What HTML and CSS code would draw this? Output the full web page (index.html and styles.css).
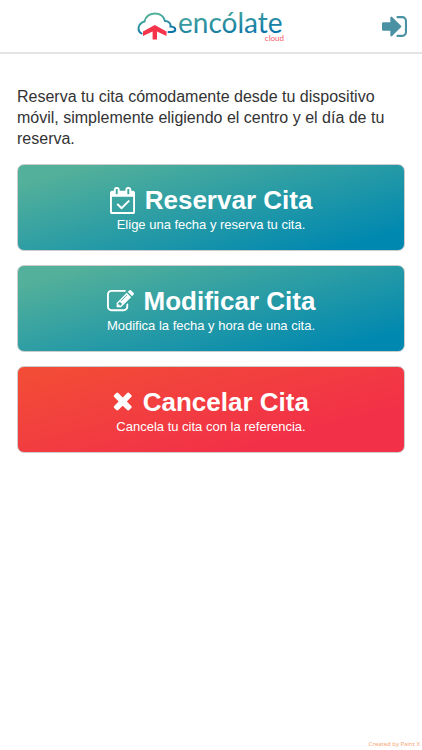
FILE: index.html
```html
<!DOCTYPE html>
<html lang="es">
<head>
	<meta charset="utf-8">
	<meta name="viewport" content="width=device-width, initial-scale=1">
	<title>Encólate Cloud</title>
	<link rel="stylesheet" href="styles.css">
</head>
<body>

<header class="header">
	<a href="#" class="logo">
		<svg class="logo-img" viewBox="0 -9 148 48" role="img" aria-label="encólate cloud">
			<defs>
				<linearGradient id="marca" x1="0" y1="0" x2="0.4" y2="1">
					<stop offset="0.2" stop-color="#53b09a"/>
					<stop offset="1" stop-color="#0a72a8"/>
				</linearGradient>
			</defs>
			<!-- nube -->
			<path class="logo-cloud" d="M4.500 22.500C0 20 .5 12.500 7.500 10.500C8.500 5 13.500 2.500 18 2.500C23 2.500 27 5.500 28 10C31.500 10 34 12.500 33.500 15.500C37 15.500 39 17.500 38 19.500C37.200 21.300 35 21 31.500 21"/>
			<!-- flecha -->
			<path class="logo-arrow" d="M17.800 14L29.500 20.500V25L20 20.500V28.500H15.600V20.500L6 25V20.500Z"/>
			<text class="logo-text" x="41" y="22">encólate</text>
			<text class="logo-sub" x="147" y="30" text-anchor="end">cloud</text>
		</svg>
	</a>
	<a href="#" class="login" aria-label="Entrar">
		<svg class="login-icon" viewBox="128 256 1536 1280">
			<path d="M1312 896q0 26-19 45l-544 544q-19 19-45 19t-45-19-19-45v-288h-448q-26 0-45-19t-19-45v-384q0-26 19-45t45-19h448v-288q0-26 19-45t45-19 45 19l544 544q19 19 19 45zm352-352v704q0 119-84.500 203.500t-203.500 84.500h-320q-13 0-22.500-9.500t-9.500-22.500q0-4-1-20t-.5-26.500 3-23.500 10-19.500 20.500-6.500h320q66 0 113-47t47-113v-704q0-66-47-113t-113-47h-312l-11.500-1-11.500-3-8-5.500-7-9-2-13.500q0-4-1-20t-.5-26.500 3-23.500 10-19.500 20.500-6.500h320q119 0 203.500 84.500t84.500 203.500z"/>
		</svg>
	</a>
</header>

<main class="content">
	<p class="intro">Reserva tu cita cómodamente desde tu dispositivo móvil, simplemente eligiendo el centro y el día de tu reserva.</p>

	<button type="button" class="btn">
		<span class="btn-title">
			<svg class="icon" viewBox="0 0 1664 1792">
				<path fill-rule="evenodd" d="M1303 964l-512 512q-10 9-23 9t-23-9l-288-288q-9-10-9-23t9-22l46-46q9-9 22-9t23 9l220 220 444-444q10-9 23-9t22 9l46 46q9 9 9 22t-9 23zm-1175 700h1408v-1024h-1408v1024zm384-1216v-288q0-14-9-23t-23-9h-64q-14 0-23 9t-9 23v288q0 14 9 23t23 9h64q14 0 23-9t9-23zm768 0v-288q0-14-9-23t-23-9h-64q-14 0-23 9t-9 23v288q0 14 9 23t23 9h64q14 0 23-9t9-23zm384-64v1280q0 52-38 90t-90 38h-1408q-52 0-90-38t-38-90v-1280q0-52 38-90t90-38h128v-96q0-66 47-113t113-47h64q66 0 113 47t47 113v96h384v-96q0-66 47-113t113-47h64q66 0 113 47t47 113v96h128q52 0 90 38t38 90z"/>
			</svg>
			Reservar Cita
		</span>
		<span class="btn-text">Elige una fecha y reserva tu cita.</span>
	</button>

	<button type="button" class="btn">
		<span class="btn-title">
			<svg class="icon" viewBox="0 0 1792 1792">
				<path d="M888 1184l116-116-152-152-116 116v56h96v96h56zm440-720q-16-16-33 1l-350 350q-17 17-1 33t33-1l350-350q17-17 1-33zm80 594v190q0 119-84.500 203.500t-203.500 84.500h-832q-119 0-203.500-84.500t-84.500-203.500v-832q0-119 84.500-203.500t203.500-84.500h832q63 0 117 25 15 7 18 23 3 17-9 29l-49 49q-14 14-32 8-23-6-45-6h-832q-66 0-113 47t-47 113v832q0 66 47 113t113 47h832q66 0 113-47t47-113v-126q0-13 9-22l64-64q15-15 35-7t20 29zm-96-738l288 288-672 672h-288v-288zm444 132l-92 92-288-288 92-92q28-28 68-28t68 28l152 152q28 28 28 68t-28 68z"/>
			</svg>
			Modificar Cita
		</span>
		<span class="btn-text">Modifica la fecha y hora de una cita.</span>
	</button>

	<button type="button" class="btn btn-danger">
		<span class="btn-title">
			<svg class="icon" viewBox="250 128 1300 1792">
				<path d="M1490 1322q0 40-28 68l-136 136q-28 28-68 28t-68-28l-294-294-294 294q-28 28-68 28t-68-28l-136-136q-28-28-28-68t28-68l294-294-294-294q-28-28-28-68t28-68l136-136q28-28 68-28t68 28l294 294 294-294q28-28 68-28t68 28l136 136q28 28 28 68t-28 68l-294 294 294 294q28 28 28 68z"/>
			</svg>
			Cancelar Cita
		</span>
		<span class="btn-text">Cancela tu cita con la referencia.</span>
	</button>
</main>

<footer class="footer">Created by Paint X</footer>

</body>
</html>
```
FILE: styles.css
```css
*{
	box-sizing: border-box;
}
body{
	display: flex;
	flex-direction: column;
	min-height: 100vh;
	margin: 0;
	background: #fff;
	color: #333;
	font-family: "Liberation Sans", Arial, sans-serif;
}

/* cabecera */
.header{
	display: grid;
	grid-template-columns: 1fr auto 1fr;
	align-items: center;
	height: 54px;
	padding: 0 15px;
	border-bottom: 2px solid #e4e4e4;
}
.logo{
	grid-column: 2;
}
.logo-img{
	display: block;
	width: 148px;
	height: 48px;
}
.logo-cloud{
	fill: none;
	stroke: url(#marca);
	stroke-width: 2;
	stroke-linecap: round;
}
.logo-arrow{
	fill: #f5334a;
}
.logo-text{
	fill: url(#marca);
	font-family: Lato, sans-serif;
	font-size: 28px;
}
.logo-sub{
	fill: #f5566a;
	font-family: Lato, sans-serif;
	font-size: 8px;
}
.login{
	justify-self: end;
}
.login-icon{
	display: block;
	width: 25px;
	height: 21px;
	fill: #4a92a3;
}

/* contenido */
.content{
	display: flex;
	flex: 1;
	flex-direction: column;
	gap: 14px;
	padding: 32px 17px;
}
.intro{
	margin: 0 0 1px;
	font-size: 16px;
	line-height: 21px;
}
.btn{
	display: block;
	width: 100%;
	padding: 19px 12px 17px;
	border: 1px solid #ccc;
	border-radius: 7px;
	background: linear-gradient(165deg, #53b09a 10%, #0088b0 90%);
	color: #fff;
	font-family: inherit;
	text-align: center;
	cursor: pointer;
}
.btn-danger{
	background: linear-gradient(165deg, #f24c36 5%, #f23148 75%);
}
.btn-title{
	display: flex;
	align-items: center;
	justify-content: center;
	gap: 10px;
	font-size: 26px;
	font-weight: bold;
	line-height: 32px;
}
.icon{
	height: 27px;
	fill: #fff;
}
.btn-text{
	display: block;
	font-size: 13px;
	line-height: 17px;
}

.footer{
	padding: 0 2px 2px;
	color: #f5a878;
	font-family: "Noto Sans", sans-serif;
	font-size: 6px;
	line-height: 8px;
	text-align: right;
}
```
